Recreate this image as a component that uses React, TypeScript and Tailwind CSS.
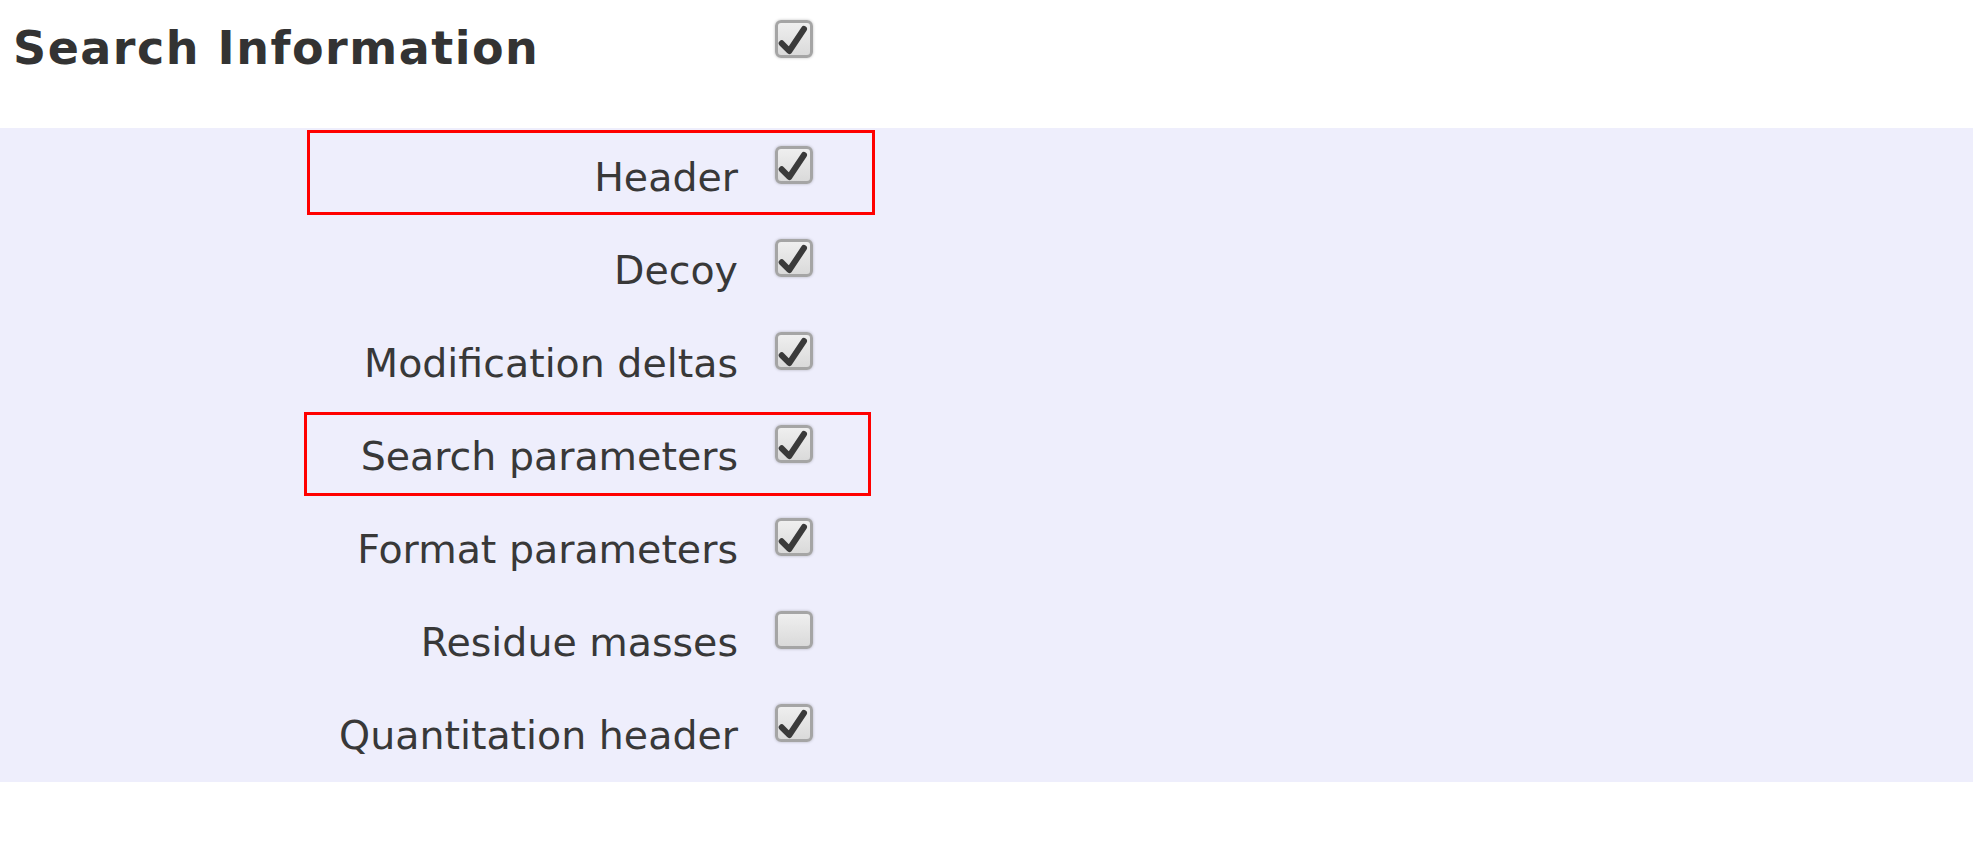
import React from 'react';

const rows: { label: string; checked: boolean }[] = [
  { label: 'Header', checked: true },
  { label: 'Decoy', checked: true },
  { label: 'Modification deltas', checked: true },
  { label: 'Search parameters', checked: true },
  { label: 'Format parameters', checked: true },
  { label: 'Residue masses', checked: false },
  { label: 'Quantitation header', checked: true },
];

const Checkbox = ({ checked }: { checked: boolean }) => {
  return (
    <span className="inline-flex h-[38px] w-[38px] shrink-0 rounded-[6px] border-[3px] border-[#a5a5a5] bg-linear-to-b from-[#efefef] to-[#dadada] shadow-[0_0_3px_rgba(0,0,0,0.25)]">
      {checked && (
        <svg viewBox="0 0 32 32" className="h-full w-full">
          <path
            d="M3.7 20.3 L11.3 28 L26 6"
            fill="none"
            stroke="#3a3a3a"
            strokeWidth="6"
            strokeLinecap="round"
            strokeLinejoin="round"
          />
        </svg>
      )}
    </span>
  );
};

export default function App() {
  return (
    <div className="relative h-[850px] w-full bg-white font-['DejaVu_Sans',sans-serif] text-[#383838]">
      {/* title row */}
      <div className="flex h-[128px] items-start pl-[13px]">
        <h1 className="w-[725px] pt-[21px] text-[46px] font-bold leading-[54px] tracking-[1.5px] text-[#333]">
          Search Information
        </h1>
        <div className="ml-[37px] mt-[20px]">
          <Checkbox checked />
        </div>
      </div>

      {/* options */}
      <div className="mr-[4px] bg-[#eeeefc] pb-[3px]">
        {rows.map((r) => (
          <div key={r.label} className="flex h-[93px] items-start pl-[13px]">
            <div className="w-[725px] pt-[26px] text-right text-[39.5px] leading-[46px]">
              {r.label}
            </div>
            <div className="ml-[37px] mt-[18px]">
              <Checkbox checked={r.checked} />
            </div>
          </div>
        ))}
      </div>

      {/* annotation boxes */}
      <div className="absolute left-[307px] top-[130px] h-[85px] w-[568px] border-[3px] border-[#f00]" />
      <div className="absolute left-[304px] top-[412px] h-[84px] w-[567px] border-[3px] border-[#f00]" />
    </div>
  );
}
